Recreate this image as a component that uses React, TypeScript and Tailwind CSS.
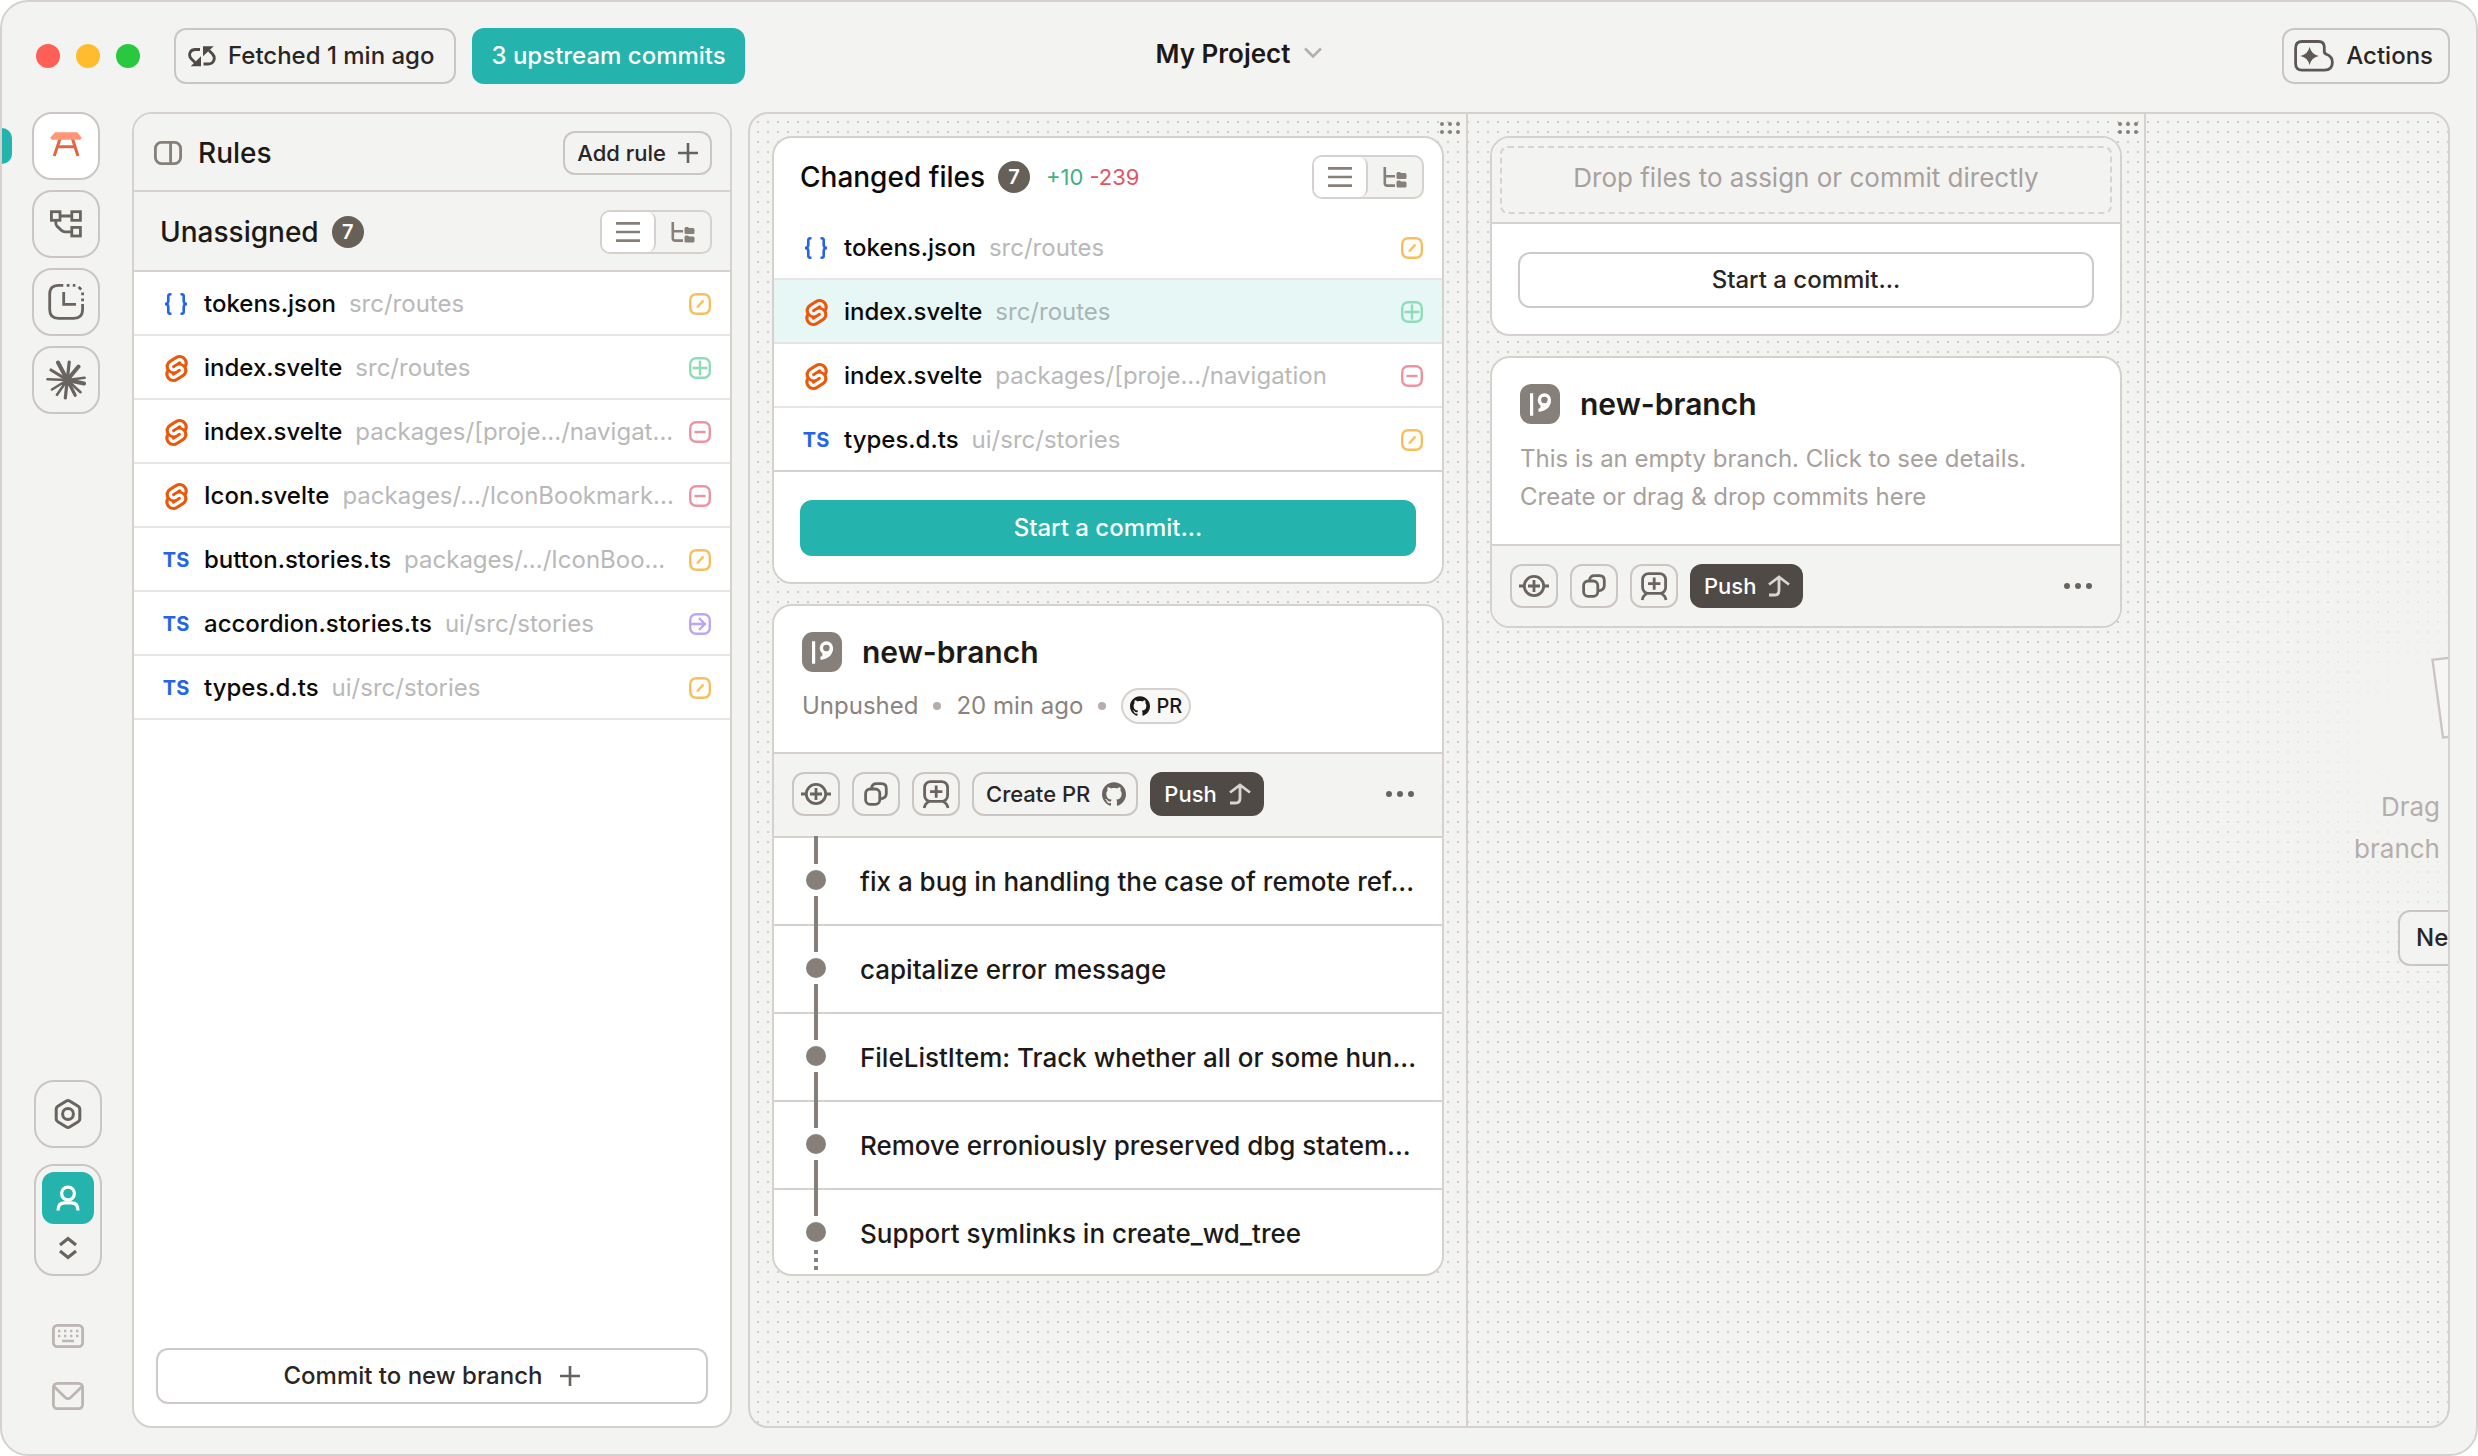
import React from "react";
import { SiGithub, SiSvelte } from "react-icons/si";

type FileKind = "json" | "svelte" | "ts";
type Status = "modified" | "added" | "deleted" | "renamed";
type FileEntry = {
  kind: FileKind;
  name: string;
  path: string;
  status: Status;
  selected?: boolean;
};

const unassigned: FileEntry[] = [
  { kind: "json", name: "tokens.json", path: "src/routes", status: "modified" },
  { kind: "svelte", name: "index.svelte", path: "src/routes", status: "added" },
  { kind: "svelte", name: "index.svelte", path: "packages/[proje.../navigat...", status: "deleted" },
  { kind: "svelte", name: "Icon.svelte", path: "packages/.../IconBookmark...", status: "deleted" },
  { kind: "ts", name: "button.stories.ts", path: "packages/.../IconBoo...", status: "modified" },
  { kind: "ts", name: "accordion.stories.ts", path: "ui/src/stories", status: "renamed" },
  { kind: "ts", name: "types.d.ts", path: "ui/src/stories", status: "modified" },
];

const changed: FileEntry[] = [
  { kind: "json", name: "tokens.json", path: "src/routes", status: "modified" },
  { kind: "svelte", name: "index.svelte", path: "src/routes", status: "added", selected: true },
  { kind: "svelte", name: "index.svelte", path: "packages/[proje.../navigation", status: "deleted" },
  { kind: "ts", name: "types.d.ts", path: "ui/src/stories", status: "modified" },
];

const commits = [
  "fix a bug in handling the case of remote ref...",
  "capitalize error message",
  "FileListItem: Track whether all or some hun...",
  "Remove erroniously preserved dbg statem...",
  "Support symlinks in create_wd_tree",
];

function KindIcon({ kind }: { kind: FileKind }) {
  if (kind === "json")
    return (
      <svg width="24" height="24" viewBox="0 0 24 24" fill="none" stroke="#2463eb" strokeWidth="2.6">
        <path d="M7.5 2.3H6.3Q4.3 2.3 4.3 4.3V9Q4.3 12 1 12Q4.3 12 4.3 15V19.7Q4.3 21.7 6.3 21.7H7.5" />
        <path d="M16.5 2.3H17.7Q19.7 2.3 19.7 4.3V9Q19.7 12 23 12Q19.7 12 19.7 15V19.7Q19.7 21.7 17.7 21.7H16.5" />
      </svg>
    );
  if (kind === "svelte") return <SiSvelte className="size-[27px] shrink-0 text-[#ea580c]" />;
  return <span className="text-xl leading-6 font-bold text-[#2463eb]">TS</span>;
}

const statusColor: Record<Status, string> = {
  modified: "#f8bd5d",
  added: "#8fdcb8",
  deleted: "#ec93a1",
  renamed: "#bda5f3",
};

const statusMark: Record<Status, string> = {
  modified: "M8 14.5L14.5 7.5",
  added: "M3.5 11H18.5M11 3.5V18.5",
  deleted: "M5.5 11H16.5",
  renamed: "M1 11H15.5M10 5L16 11L10 17",
};

function StatusIcon({ status }: { status: Status }) {
  return (
    <svg className="shrink-0" width="22" height="22" viewBox="0 0 22 22" fill="none" stroke={statusColor[status]} strokeWidth="2.4">
      <rect x="1.2" y="1.2" width="19.6" height="19.6" rx="6" />
      <path d={statusMark[status]} />
    </svg>
  );
}

function FileRow({ file, divider }: { file: FileEntry; divider: string }) {
  return (
    <li
      className={`flex h-16 items-center border-b-2 pt-0.5 pr-[19px] pl-[30px] ${divider} ${file.selected ? "bg-[#e7f7f6]" : ""}`}
    >
      <span className="flex w-6 shrink-0 justify-center">
        <KindIcon kind={file.kind} />
      </span>
      <span className="ml-4 text-2xl font-medium whitespace-nowrap text-[#0c0a09]">{file.name}</span>
      <span className={`ml-[13px] flex-1 text-2xl whitespace-nowrap ${file.selected ? "text-[#a9b5b4]" : "text-[#b9b9b9]"}`}>
        {file.path}
      </span>
      <StatusIcon status={file.status} />
    </li>
  );
}

function CountBadge({ value }: { value: number }) {
  return (
    <span className="flex size-8 items-center justify-center rounded-full bg-[#666059] text-xl font-semibold text-white">
      {value}
    </span>
  );
}

function ViewToggle() {
  return (
    <div className="flex h-11 w-28 overflow-hidden rounded-[10px] border-2 border-[#d6d1cf] bg-[#f3f3f1]">
      <button aria-label="List view" className="flex w-[54px] items-center justify-center rounded-r-[8px] border-r-2 border-[#d6d1cf] bg-white">
        <svg width="24" height="20" viewBox="0 0 24 20" stroke="#87807a" strokeWidth="2.7">
          <path d="M0 1.4H24M0 10H24M0 18.6H24" />
        </svg>
      </button>
      <button aria-label="Tree view" className="flex flex-1 items-center justify-center">
        <svg width="24" height="21" viewBox="0 0 24 21" fill="none" stroke="#87807a" strokeWidth="2.6">
          <path d="M1.8 0V16.2Q1.8 18.6 4.2 18.6H12M1.8 9.3H12" />
          <path
            d="M13.5 6.5Q13.5 5 15 5H17L18 6H22Q23.5 6 23.5 7.5V10.5Q23.5 12 22 12H15Q13.5 12 13.5 10.5ZM13.5 15Q13.5 13.5 15 13.5H17L18 14.5H22Q23.5 14.5 23.5 16V19Q23.5 20.5 22 20.5H15Q13.5 20.5 13.5 19Z"
            fill="#87807a"
            stroke="none"
          />
        </svg>
      </button>
    </div>
  );
}

function PlusIcon() {
  return (
    <svg width="20" height="20" viewBox="0 0 20 20" stroke="#66625f" strokeWidth="2.6">
      <path d="M0 10H20M10 0V20" />
    </svg>
  );
}

function RailButton({ label, active, children }: { label: string; active?: boolean; children: React.ReactNode }) {
  return (
    <button
      aria-label={label}
      className={`flex size-[68px] items-center justify-center rounded-[20px] border-2 border-[#cbc5c3] ${active ? "bg-white" : ""}`}
    >
      {children}
    </button>
  );
}

function Rail() {
  return (
    <nav className="flex w-[130px] shrink-0 flex-col justify-between pb-[18px]">
      <div className="flex flex-col gap-2.5">
        <div className="flex items-center gap-5">
          <span className="h-9 w-2.5 rounded-r-[10px] bg-[#25b3ad]" />
          <RailButton label="Workspace" active>
            <svg width="40" height="40" viewBox="0 0 40 40" fill="none" stroke="#dd6840" strokeWidth="3">
              <path d="M14.3 12L8.2 30M26.2 12L32 30M10.5 20.7H29.7" />
              <path d="M9 6.3H31.3L35.3 11.2V12.5L34.3 13.7H5.7L4.7 12.5V11.2Z" fill="#ff9678" stroke="none" />
            </svg>
          </RailButton>
        </div>
        <div className="ml-[30px] flex flex-col gap-2.5">
          <RailButton label="Branches">
            <svg width="40" height="40" viewBox="0 0 40 40" fill="none" stroke="#696460" strokeWidth="2.8">
              <rect x="5.4" y="7.7" width="8.6" height="8.6" />
              <rect x="25.8" y="7.7" width="8.6" height="8.6" />
              <rect x="25.8" y="23.4" width="8.6" height="8.6" />
              <path d="M14 12H26M9.8 16V19Q9.8 21 11.2 22.4L15.5 26.4Q17 27.8 19 27.8H26" />
            </svg>
          </RailButton>
          <RailButton label="History">
            <svg width="40" height="40" viewBox="0 0 40 40" fill="none" stroke="#696460" strokeWidth="2.8">
              <path d="M17.3 3.4H12.5Q3.7 3.4 3.7 12.2V27.5Q3.7 36.3 12.5 36.3H27.8Q36.6 36.3 36.6 27.5V22" />
              <path d="M20.7 3.4H23.5M26.8 3.4H29.4M32.6 5L35.2 7.5M36.6 10.4V13.2M36.6 16.5V19.3" />
              <path d="M17.7 10V22.3H30" />
            </svg>
          </RailButton>
          <RailButton label="Agents">
            <svg width="40" height="40" viewBox="0 0 40 40" fill="none" stroke="#696460" strokeLinecap="round">
              <path strokeWidth="4" d="M21.3 20L12 2.5M21.3 20L32.5 6.5M21.3 20L38 23.5" />
              <path strokeWidth="3.2" d="M21.3 20L23.2 2M21.3 20L5 10M21.3 20L29.2 35.3M21.3 20L19.3 38" />
              <path strokeWidth="2.6" d="M21.3 20L38.6 17.8M21.3 20L34.5 32.2M21.3 20L11 34.8M21.3 20L6 29.5M21.3 20L1.5 19.3" />
              <circle cx="21.3" cy="20" r="3" fill="#696460" />
            </svg>
          </RailButton>
        </div>
      </div>
      <div className="ml-8 flex w-[68px] flex-col items-center">
        <RailButton label="Settings">
          <svg width="30" height="32" viewBox="0 0 30 32" fill="none" stroke="#696460" strokeWidth="3" strokeLinejoin="round">
            <path d="M13.4 3Q15 2 16.6 3L25.2 8.2Q26.8 9.2 26.8 11V21Q26.8 22.8 25.2 23.8L16.6 29Q15 30 13.4 29L4.8 23.8Q3.2 22.8 3.2 21V11Q3.2 9.2 4.8 8.2Z" />
            <circle cx="15" cy="16" r="5.4" />
          </svg>
        </RailButton>
        <button aria-label="Account" className="mt-4 flex h-28 w-[68px] flex-col items-center rounded-[20px] border-2 border-[#cbc5c3] pt-1.5">
          <span className="flex size-[52px] items-center justify-center rounded-xl bg-[#25b3ad]">
            <svg width="26" height="28" viewBox="0 0 26 28" fill="none" stroke="white" strokeWidth="3.2">
              <circle cx="13" cy="9.5" r="6.4" />
              <path d="M3 26.5Q3 18.8 9.5 18.8H16.5Q23 18.8 23 26.5" />
            </svg>
          </span>
          <svg className="mt-3" width="20" height="24" viewBox="0 0 20 24" fill="none" stroke="#696460" strokeWidth="3.2">
            <path d="M2 9L10 2.5L18 9M2 15L10 21.5L18 15" />
          </svg>
        </button>
        <button aria-label="Keyboard shortcuts" className="mt-12">
          <svg width="32" height="24" viewBox="0 0 32 24" fill="none" stroke="#bcb5b3" strokeWidth="2.8">
            <rect x="1.4" y="1.4" width="29.2" height="21.2" rx="4" />
            <path strokeWidth="2.6" d="M6 7H8.4M12 7H14.4M18 7H20.4M24 7H26.4M6 12H8.4M12 12H14.4M18 12H20.4M24 12H26.4M10 17H22" />
          </svg>
        </button>
        <button aria-label="Send feedback" className="mt-[34px]">
          <svg width="32" height="28" viewBox="0 0 32 28" fill="none" stroke="#bcb5b3" strokeWidth="2.8">
            <rect x="1.4" y="1.4" width="29.2" height="25.2" rx="4" />
            <path d="M2 4.5L13 15.2Q16 18 19 15.2L30 4.5" />
          </svg>
        </button>
      </div>
    </nav>
  );
}

function LeftPanel() {
  return (
    <section className="flex w-[600px] shrink-0 flex-col overflow-hidden rounded-[20px] border-2 border-[#d6d1cf] bg-white">
      <div className="flex h-[78px] items-center border-b-2 border-[#d6d1cf] bg-[#f3f3f1] pt-0.5 pr-[18px] pl-5">
        <svg width="28" height="24" viewBox="0 0 28 24" fill="none" stroke="#87807a" strokeWidth="2.8">
          <rect x="1.4" y="1.4" width="25.2" height="21.2" rx="6" />
          <path d="M16.6 1.4V22.6" />
        </svg>
        <h2 className="ml-4 flex-1 text-[28px] font-medium text-[#1c1917]">Rules</h2>
        <button className="flex h-11 items-center gap-3 rounded-xl border-2 border-[#cbc5c3] px-3 text-[22px] font-medium text-[#292524]">
          Add rule
          <PlusIcon />
        </button>
      </div>
      <div className="flex h-20 items-center border-b-2 border-[#d6d1cf] bg-[#f3f3f1] pt-0.5 pr-[18px] pl-[26px]">
        <h2 className="mr-[13px] text-[28px] font-medium text-[#1c1917]">Unassigned</h2>
        <CountBadge value={7} />
        <div className="flex-1" />
        <ViewToggle />
      </div>
      <ul>
        {unassigned.map((file, i) => (
          <FileRow key={i} file={file} divider="border-[#e7e5e4]" />
        ))}
      </ul>
      <div className="mt-auto px-[22px] pb-[22px]">
        <button className="flex h-14 w-full items-center justify-center gap-[18px] rounded-xl border-2 border-[#cfcac8] text-2xl font-medium text-[#292524]">
          Commit to new branch
          <PlusIcon />
        </button>
      </div>
    </section>
  );
}

function ToolButton({ label, children }: { label: string; children: React.ReactNode }) {
  return (
    <button aria-label={label} className="flex h-11 w-12 items-center justify-center rounded-xl border-2 border-[#cbc5c3]">
      <svg width="30" height="30" viewBox="0 0 30 30" fill="none" stroke="#696460" strokeWidth="2.8">
        {children}
      </svg>
    </button>
  );
}

function BranchToolbar({ withPr }: { withPr?: boolean }) {
  return (
    <div
      className={`flex items-center gap-3 border-t-2 border-[#d6d1cf] bg-[#f3f3f1] pt-[18px] pr-7 pl-[18px] ${withPr ? "pb-5" : "pb-[18px]"}`}
    >
      <ToolButton label="Add empty commit">
        <circle cx="15" cy="15" r="9.7" />
        <path d="M0 15H5M25 15H30M9 15H21M15 9V21" />
      </ToolButton>
      <ToolButton label="Copy branch">
        <rect x="4.6" y="10" width="14.2" height="15.4" rx="4.6" />
        <path d="M10.6 9Q11 4.7 15.5 4.7H20.5Q25.3 4.7 25.3 9.5V14.5Q25.3 19.3 19.5 19.8" />
      </ToolButton>
      <ToolButton label="Add dependent branch">
        <rect x="3.6" y="2.6" width="23" height="19.8" rx="6" />
        <path d="M9 12.6H21.4M15.2 6.5V18.7M3.2 29Q3.8 24.5 8 22.4M27 29Q26.4 24.5 22.2 22.4" />
      </ToolButton>
      {withPr && (
        <button className="flex h-11 items-center gap-3 rounded-xl border-2 border-[#cbc5c3] pr-2.5 pl-3 text-[22px] font-medium text-[#292524]">
          Create PR
          <SiGithub className="size-6 text-[#696460]" />
        </button>
      )}
      <button className="flex h-11 items-center gap-3 rounded-xl bg-[#4f4a46] pr-[13px] pl-3.5 text-[22px] font-medium text-white">
        Push
        <svg width="22" height="22" viewBox="0 0 22 22" fill="none" stroke="#d9d5d3" strokeWidth="2.8">
          <path d="M1 9.5L11 2L21 9.5M11 2V15.5Q11 20 6.5 20H1" />
        </svg>
      </button>
      <button aria-label="More actions" className="ml-auto flex gap-[5px]">
        <span className="size-1.5 rounded-full bg-[#696460]" />
        <span className="size-1.5 rounded-full bg-[#696460]" />
        <span className="size-1.5 rounded-full bg-[#696460]" />
      </button>
    </div>
  );
}

function BranchTitle() {
  return (
    <div className="flex h-10 items-center gap-5">
      <svg width="40" height="40" viewBox="0 0 40 40" fill="none">
        <rect width="40" height="40" rx="11" fill="#87807a" />
        <path d="M11.6 9.3V31.7" stroke="white" strokeWidth="3.2" />
        <circle cx="24.4" cy="16" r="5" stroke="white" strokeWidth="3.4" />
        <path d="M29.4 16Q29.4 24.5 18.5 26.3M22.3 19.8L21.8 25" stroke="white" strokeWidth="3.2" />
      </svg>
      <h3 className="text-[30px] font-semibold text-[#1c1917]">new-branch</h3>
    </div>
  );
}

function DragHandle() {
  return (
    <div className="absolute top-2 right-1.5 grid grid-cols-3 gap-1">
      {Array.from({ length: 6 }, (_, i) => (
        <span key={i} className="size-1 rounded-full bg-[#87807a]" />
      ))}
    </div>
  );
}

function Commit({ message, first, last }: { message: string; first: boolean; last: boolean }) {
  return (
    <li className={`flex pr-6 pl-8 ${last ? "h-[84px]" : "h-[88px] border-b-2 border-[#d6d1cf]"}`}>
      <span className="flex w-5 shrink-0 flex-col items-center gap-1.5">
        <span className={`w-1 shrink-0 bg-[#87807a] ${first ? "-mt-0.5 h-7" : "h-[26px]"}`} />
        <span className="size-5 shrink-0 rounded-full bg-[#87807a]" />
        {last ? (
          <span className="mt-0.5 w-1 flex-1 bg-[repeating-linear-gradient(#87807a_0_4px,transparent_4px_8px)]" />
        ) : (
          <span className="-mb-0.5 w-1 flex-1 bg-[#87807a]" />
        )}
      </span>
      <span className="ml-[34px] flex h-[86px] items-center text-[26px] font-medium whitespace-nowrap text-[#1c1917]">{message}</span>
    </li>
  );
}

function Dot() {
  return <span className="size-2 rounded-full bg-[#b5aeab]" />;
}

const card = "overflow-hidden rounded-[20px] border-2 border-[#d6d1cf] bg-white";

function StackOne() {
  return (
    <div className="relative flex w-[718px] shrink-0 flex-col gap-5 border-r-2 border-[#d6d1cf] p-[22px]">
      <DragHandle />
      <section className={card}>
        <div className="flex h-[78px] items-center pr-[18px] pl-[26px]">
          <h2 className="mr-[13px] text-[28px] font-medium text-[#0c0a09]">Changed files</h2>
          <CountBadge value={7} />
          <span className="ml-4 text-[22px] text-[#3fb27f]">+10</span>
          <span className="ml-1.5 text-[22px] text-[#de5567]">-239</span>
          <div className="flex-1" />
          <ViewToggle />
        </div>
        <ul>
          {changed.map((file, i) => (
            <FileRow key={i} file={file} divider={i === changed.length - 1 ? "border-[#d6d1cf]" : "border-[#e7e5e4]"} />
          ))}
        </ul>
        <div className="px-[26px] pt-7 pb-[26px]">
          <button className="h-14 w-full rounded-xl bg-[#25b3ad] text-2xl font-medium text-white">Start a commit...</button>
        </div>
      </section>
      <section className={card}>
        <div className="flex h-[146px] flex-col gap-4 px-7 pt-[26px]">
          <BranchTitle />
          <div className="flex h-9 items-center gap-[15px] text-2xl text-[#8b837e]">
            <span>Unpushed</span>
            <Dot />
            <span>20 min ago</span>
            <Dot />
            <span className="flex h-9 items-center gap-1.5 rounded-full border-2 border-[#d6d1cf] bg-[#f8f8f7] px-[7px] text-xl font-medium text-[#1c1917]">
              <SiGithub className="size-5" />
              PR
            </span>
          </div>
        </div>
        <BranchToolbar withPr />
        <ul className="border-t-2 border-[#d6d1cf]">
          {commits.map((message, i) => (
            <Commit key={message} message={message} first={i === 0} last={i === commits.length - 1} />
          ))}
        </ul>
      </section>
    </div>
  );
}

function StackTwo() {
  return (
    <div className="relative flex w-[678px] shrink-0 flex-col gap-5 border-r-2 border-[#d6d1cf] p-[22px]">
      <DragHandle />
      <section className={card}>
        <div className="border-b-2 border-[#d6d1cf] bg-[#f3f3f1] p-2">
          <p className="flex h-[68px] items-center justify-center rounded-lg border-2 border-dashed border-[#d6d3d1] pb-1.5 text-[26px] text-[#a8a09d]">
            Drop files to assign or commit directly
          </p>
        </div>
        <div className="px-[26px] pt-7 pb-[26px]">
          <button className="h-14 w-full rounded-xl border-2 border-[#cfcac8] bg-white text-2xl font-medium text-[#292524]">
            Start a commit...
          </button>
        </div>
      </section>
      <section className={card}>
        <div className="flex h-[186px] flex-col gap-4 px-7 pt-[26px]">
          <BranchTitle />
          <p className="text-2xl leading-[38px] text-[#a8a09d]">
            This is an empty branch. Click to see details.
            <br />
            Create or drag &amp; drop commits here
          </p>
        </div>
        <BranchToolbar />
      </section>
    </div>
  );
}

function NewStack() {
  return (
    <div className="flex min-w-0 flex-1 flex-col items-end justify-center overflow-hidden bg-[radial-gradient(circle_320px_at_100%_48%,#f3f3f1_15%,transparent)] pt-[82px]">
      <svg width="20" height="84" viewBox="0 0 20 84" fill="#f6f6f4" stroke="#cbc5c3" strokeWidth="2.4">
        <path d="M24 1.6L4.5 3.8L15 81.5L24 80.6Z" />
      </svg>
      <p className="mt-[46px] pr-2 text-right text-[26px] leading-[42px] text-[#b5aeab]">
        Drag
        <br />
        branch
      </p>
      <button className="mt-10 -mr-4 h-14 w-[66px] overflow-hidden rounded-xl border-2 border-[#cbc5c3] bg-[#f3f3f1] pl-4 text-left text-2xl font-medium text-[#292524]">
        Ne
      </button>
    </div>
  );
}

export default function App() {
  return (
    <div className="flex min-h-screen flex-col overflow-hidden rounded-[28px] border-2 border-[#d6d1cf] bg-[#f3f3f1] font-['Inter',sans-serif]">
      <header className="grid h-[110px] grid-cols-[1fr_auto_1fr] items-center pr-[26px] pb-0.5 pl-[34px]">
        <div className="flex items-center">
          <div className="flex gap-4">
            <span className="size-6 rounded-full bg-[#ff5f57]" />
            <span className="size-6 rounded-full bg-[#febc2e]" />
            <span className="size-6 rounded-full bg-[#28c840]" />
          </div>
          <button className="ml-[34px] flex h-14 items-center gap-3 rounded-xl border-2 border-[#cbc5c3] pr-5 pl-3 text-2xl font-medium text-[#292524]">
            <svg width="28" height="21" viewBox="0 0 28 21" fill="none" stroke="#4f4a46" strokeWidth="2.8">
              <path d="M12 3.5H7.5C1.5 3.5 0 9.5 3.5 13L7 16.5" />
              <path d="M21 4.5L24.5 8C28 12 26 18 20 18H15.5" />
              <path d="M13 10.3V20.3H2.7ZM15 0.3H25.7L15 10.3Z" fill="#4f4a46" stroke="none" />
            </svg>
            Fetched 1 min ago
          </button>
          <button className="ml-4 h-14 rounded-xl bg-[#25b3ad] px-[19px] text-2xl font-medium text-white">3 upstream commits</button>
        </div>
        <button className="flex items-center gap-3.5 pr-2 pb-1.5 text-[26px] font-semibold text-[#1c1917]">
          My Project
          <svg width="18" height="12" viewBox="0 0 18 12" fill="none" stroke="#b5aeab" strokeWidth="2.6">
            <path d="M1 1.5L9 9.5L17 1.5" />
          </svg>
        </button>
        <div className="flex justify-end">
          <button className="flex h-14 items-center gap-3 rounded-xl border-2 border-[#cbc5c3] pr-[15px] pl-2.5 text-2xl font-medium text-[#292524]">
            <svg width="40" height="32" viewBox="0 0 40 32" fill="none" stroke="#5d5855" strokeWidth="2.8">
              <path d="M8 1.5H24.5Q30.3 1.5 30.3 7.3V11.5Q30.3 13.6 32.3 14.2Q38.4 16.4 38.4 22.3Q38.4 30.2 30.4 30.2H8Q1.6 30.2 1.6 23.8V7.9Q1.6 1.5 8 1.5Z" />
              <path
                d="M15.6 6.8Q17.2 14.4 24.8 16Q17.2 17.6 15.6 25.2Q14 17.6 6.4 16Q14 14.4 15.6 6.8Z"
                fill="#5d5855"
                stroke="none"
              />
            </svg>
            Actions
          </button>
        </div>
      </header>
      <div className="flex flex-1 pr-[26px] pb-[26px]">
        <Rail />
        <LeftPanel />
        <main className="ml-4 flex min-w-0 flex-1 overflow-hidden rounded-[20px] border-2 border-[#d6d1cf] bg-[conic-gradient(at_2px_2px,transparent_75%,#d0cecb_0)] bg-size-[10px_10px] bg-position-[7px_7px]">
          <StackOne />
          <StackTwo />
          <NewStack />
        </main>
      </div>
    </div>
  );
}
